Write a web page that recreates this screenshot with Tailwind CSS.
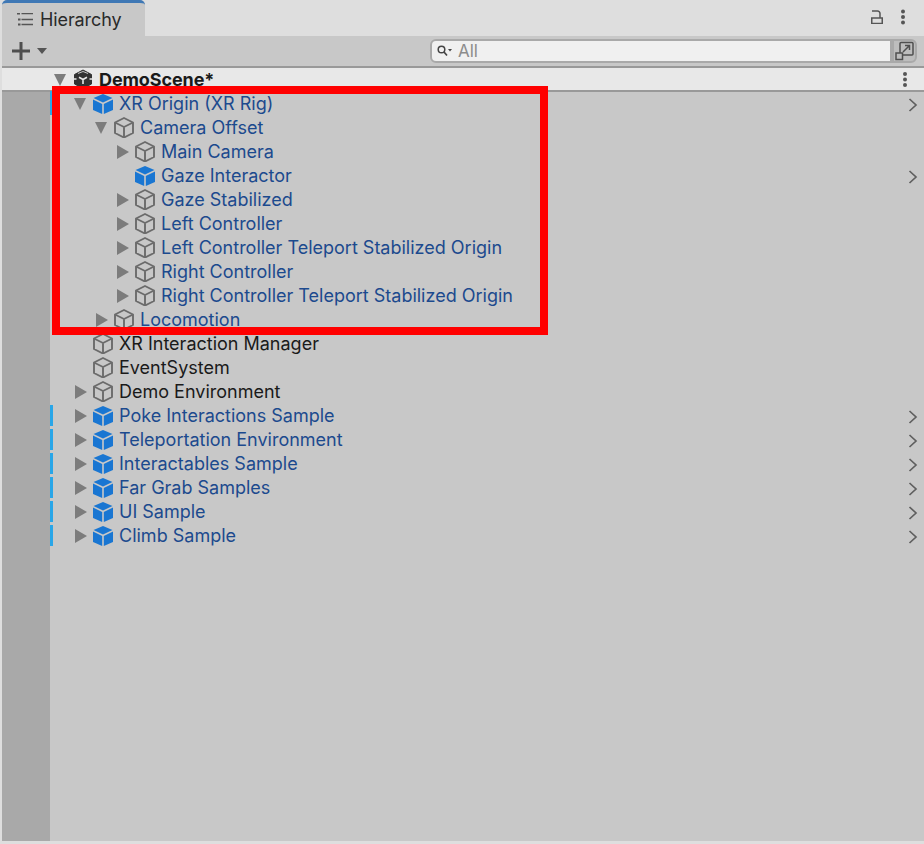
<!DOCTYPE html>
<html>
<head>
<meta charset="utf-8">
<title>Hierarchy</title>
<script src="https://cdn.jsdelivr.net/npm/@tailwindcss/browser@4"></script>
</head>
<body class="w-[924px] h-[844px] overflow-hidden bg-[#dedede] font-['Inter',sans-serif] text-[18px] text-[#1a1a1a]">
<svg class="hidden">
  <symbol id="box" viewBox="0 0 22 22"><path d="M11 2 20 6.500V17l-9 4.500L2 17V6.500zM2 6.500l9 4.500 9-4.500M11 11v10.500" fill="none" stroke="#6b6b6b" stroke-width="1.900" stroke-linejoin="round"/></symbol>
  <symbol id="prefab" viewBox="0 0 22 22"><path d="M11 2 20.500 6 11 10.500 1.500 6z" fill="#1976d2"/><path d="M1 7.500 10.200 12v10L1 18z" fill="#1976d2"/><path d="M21 7.500 11.800 12v10L21 18z" fill="#1976d2"/></symbol>
  <symbol id="down" viewBox="0 0 14 16"><path d="M1 3h12L7 15z" fill="#7c7c7c"/></symbol>
  <symbol id="right" viewBox="0 0 14 16"><path d="M2 2v14l12-7z" fill="#7c7c7c"/></symbol>
  <symbol id="chev" viewBox="0 0 10 14"><path d="M1.500 1 8 7l-6.500 6" fill="none" stroke="#5f5f5f" stroke-width="1.700"/></symbol>
</svg>

<div class="relative h-[841px] ml-[2px]">
  <!-- tab strip -->
  <div class="h-[36px] flex items-stretch justify-between">
    <div class="w-[143px] bg-[#c8c8c8] rounded-t-[5px] border-t-[3px] border-[#3f78b5] flex items-center pl-[15px] gap-[6px]">
      <svg width="17" height="14" viewBox="0 0 17 14"><path d="M4.500 .5H16M4.500 6.500H16M4.500 11.500H16" stroke="#555" stroke-width="1.500"/><path d="M0 .5h3M1 6.500h2.500M1 11.500h2.500" stroke="#555" stroke-width="1.800"/></svg>
      <span class="text-[#2a2a2a] tracking-[-0.1px]">Hierarchy</span>
    </div>
    <div class="flex items-center gap-[17px] pr-[18px] pb-[2px]">
      <svg width="14" height="14" viewBox="0 0 14 14"><path d="M3 1H8.500A2.500 2.500 0 0 1 11 3.500V8" fill="none" stroke="#555" stroke-width="1.500"/><rect x="2.750" y="8" width="10.500" height="5.500" fill="none" stroke="#555" stroke-width="1.500"/></svg>
      <svg width="6" height="16" viewBox="0 0 6 16"><circle cx="3" cy="2.500" r="2" fill="#555"/><circle cx="3" cy="8" r="2" fill="#555"/><circle cx="3" cy="13.500" r="2" fill="#555"/></svg>
    </div>
  </div>
  <!-- toolbar -->
  <div class="h-[30px] bg-[#c8c8c8] flex items-center pl-[10px] pr-[7px]">
    <svg width="18" height="18" viewBox="0 0 18 18"><path d="M9 0v18M0 9h18" stroke="#4f4f4f" stroke-width="3"/></svg>
    <svg class="ml-[7px]" width="10" height="6" viewBox="0 0 10 6"><path d="M0 0h10L5 6z" fill="#555"/></svg>
    <div class="ml-auto flex items-stretch h-[24px]">
      <div class="w-[462px] bg-[#f0f0f0] border-[2px] border-[#a9a9a9] rounded-l-[6px] flex items-center pl-[5px] gap-[1px]">
        <svg width="15" height="12" viewBox="0 0 15 12"><circle cx="4.500" cy="4.500" r="3.300" fill="none" stroke="#444" stroke-width="1.500"/><path d="M7 7l3 3.500" stroke="#444" stroke-width="1.700"/><path d="M11 4h4l-2 2.500z" fill="#444"/></svg>
        <span class="ml-[5px] pt-[1px] text-[#8c8c8c] text-[17px]">All</span>
      </div>
      <div class="w-[25px] bg-[#bdbdbd] border-[2px] border-[#a9a9a9] rounded-r-[6px] flex items-center justify-center">
        <svg class="shrink-0" width="20" height="20" viewBox="0 0 20 20"><path d="M5 12V2.500A1 1 0 0 1 6 1.500h11a1 1 0 0 1 1 1V13a1 1 0 0 1-1 1H8" fill="none" stroke="#4f4f4f" stroke-width="1.500"/><rect x="1" y="12" width="6.500" height="6.500" fill="none" stroke="#4f4f4f" stroke-width="1.500"/><path d="M8 11l6-6M10 4.500h4.500V9" fill="none" stroke="#4f4f4f" stroke-width="1.500"/></svg>
      </div>
    </div>
  </div>
  <!-- scene header -->
  <div class="h-[26px] bg-[#e8e8e8] border-y-[2px] border-[#999999] flex items-center pl-[51px] pr-[16px]">
    <svg width="14" height="16"><use href="#down"/></svg>
    <svg class="ml-[6px]" width="20" height="20" viewBox="0 0 20 20"><path d="M10 1 18.500 5.500V15L10 19.500 1.500 15V5.500z" fill="#333" stroke="#333" stroke-width="1" stroke-linejoin="round"/><path d="M10 10.500V15M10 10.500 6 8.200M10 10.500 14 8.200" stroke="#e8e8e8" stroke-width="1.600" fill="none"/><path d="M5 4.500 10 2.500 15 4.500" stroke="#e8e8e8" stroke-width=".8" fill="none"/><path d="M1 10h2.500M16.500 10H19M10 17v3" stroke="#e8e8e8" stroke-width="1.300"/></svg>
    <span class="ml-[6px] font-bold tracking-[-0.1px]">DemoScene*</span>
    <svg class="ml-auto" width="6" height="15" viewBox="0 0 6 15"><circle cx="3" cy="2" r="2" fill="#555"/><circle cx="3" cy="7.500" r="2" fill="#555"/><circle cx="3" cy="13" r="2" fill="#555"/></svg>
  </div>
  <!-- tree -->
  <div class="flex h-[749px] bg-[#c8c8c8]">
    <div class="w-[48px] h-full bg-[#a9a9a9]"></div>
    <div class="flex-1 -mt-[1px]">
      <div class="relative h-6 flex items-center pl-[23px] text-[#1c4a8e]"><i class="absolute left-0 top-0 h-full w-[3px] bg-[#29a6e8]"></i><svg width="14" height="16"><use href="#down"/></svg><svg class="ml-[5px]" width="22" height="22"><use href="#prefab"/></svg><span class="ml-[5px]">XR Origin (XR Rig)</span><svg class="ml-auto mr-[6px] mt-[3px]" width="10" height="14"><use href="#chev"/></svg></div>
      <div class="h-6 flex items-center pl-[44px] text-[#1c4a8e]"><svg width="14" height="16"><use href="#down"/></svg><svg class="ml-[5px]" width="22" height="22"><use href="#box"/></svg><span class="ml-[5px]">Camera Offset</span></div>
      <div class="h-6 flex items-center pl-[65px] text-[#1c4a8e]"><svg width="14" height="16"><use href="#right"/></svg><svg class="ml-[5px]" width="22" height="22"><use href="#box"/></svg><span class="ml-[5px]">Main Camera</span></div>
      <div class="h-6 flex items-center pl-[84px] text-[#1c4a8e]"><svg width="22" height="22"><use href="#prefab"/></svg><span class="ml-[5px]">Gaze Interactor</span><svg class="ml-auto mr-[6px] mt-[3px]" width="10" height="14"><use href="#chev"/></svg></div>
      <div class="h-6 flex items-center pl-[65px] text-[#1c4a8e]"><svg width="14" height="16"><use href="#right"/></svg><svg class="ml-[5px]" width="22" height="22"><use href="#box"/></svg><span class="ml-[5px]">Gaze Stabilized</span></div>
      <div class="h-6 flex items-center pl-[65px] text-[#1c4a8e]"><svg width="14" height="16"><use href="#right"/></svg><svg class="ml-[5px]" width="22" height="22"><use href="#box"/></svg><span class="ml-[5px]">Left Controller</span></div>
      <div class="h-6 flex items-center pl-[65px] text-[#1c4a8e]"><svg width="14" height="16"><use href="#right"/></svg><svg class="ml-[5px]" width="22" height="22"><use href="#box"/></svg><span class="ml-[5px]">Left Controller Teleport Stabilized Origin</span></div>
      <div class="h-6 flex items-center pl-[65px] text-[#1c4a8e]"><svg width="14" height="16"><use href="#right"/></svg><svg class="ml-[5px]" width="22" height="22"><use href="#box"/></svg><span class="ml-[5px]">Right Controller</span></div>
      <div class="h-6 flex items-center pl-[65px] text-[#1c4a8e]"><svg width="14" height="16"><use href="#right"/></svg><svg class="ml-[5px]" width="22" height="22"><use href="#box"/></svg><span class="ml-[5px]">Right Controller Teleport Stabilized Origin</span></div>
      <div class="h-6 flex items-center pl-[44px] text-[#1c4a8e]"><svg width="14" height="16"><use href="#right"/></svg><svg class="ml-[5px]" width="22" height="22"><use href="#box"/></svg><span class="ml-[5px]">Locomotion</span></div>
      <div class="h-6 flex items-center pl-[42px]"><svg width="22" height="22"><use href="#box"/></svg><span class="ml-[5px]">XR Interaction Manager</span></div>
      <div class="h-6 flex items-center pl-[42px]"><svg width="22" height="22"><use href="#box"/></svg><span class="ml-[5px]">EventSystem</span></div>
      <div class="h-6 flex items-center pl-[23px]"><svg width="14" height="16"><use href="#right"/></svg><svg class="ml-[5px]" width="22" height="22"><use href="#box"/></svg><span class="ml-[5px]">Demo Environment</span></div>
      <div class="relative h-6 flex items-center pl-[23px] text-[#1c4a8e]"><i class="absolute left-0 top-[2px] bottom-[1px] w-[3px] bg-[#29a6e8]"></i><svg width="14" height="16"><use href="#right"/></svg><svg class="ml-[5px]" width="22" height="22"><use href="#prefab"/></svg><span class="ml-[5px]">Poke Interactions Sample</span><svg class="ml-auto mr-[6px] mt-[3px]" width="10" height="14"><use href="#chev"/></svg></div>
      <div class="relative h-6 flex items-center pl-[23px] text-[#1c4a8e]"><i class="absolute left-0 top-[2px] bottom-[1px] w-[3px] bg-[#29a6e8]"></i><svg width="14" height="16"><use href="#right"/></svg><svg class="ml-[5px]" width="22" height="22"><use href="#prefab"/></svg><span class="ml-[5px]">Teleportation Environment</span><svg class="ml-auto mr-[6px] mt-[3px]" width="10" height="14"><use href="#chev"/></svg></div>
      <div class="relative h-6 flex items-center pl-[23px] text-[#1c4a8e]"><i class="absolute left-0 top-[2px] bottom-[1px] w-[3px] bg-[#29a6e8]"></i><svg width="14" height="16"><use href="#right"/></svg><svg class="ml-[5px]" width="22" height="22"><use href="#prefab"/></svg><span class="ml-[5px]">Interactables Sample</span><svg class="ml-auto mr-[6px] mt-[3px]" width="10" height="14"><use href="#chev"/></svg></div>
      <div class="relative h-6 flex items-center pl-[23px] text-[#1c4a8e]"><i class="absolute left-0 top-[2px] bottom-[1px] w-[3px] bg-[#29a6e8]"></i><svg width="14" height="16"><use href="#right"/></svg><svg class="ml-[5px]" width="22" height="22"><use href="#prefab"/></svg><span class="ml-[5px]">Far Grab Samples</span><svg class="ml-auto mr-[6px] mt-[3px]" width="10" height="14"><use href="#chev"/></svg></div>
      <div class="relative h-6 flex items-center pl-[23px] text-[#1c4a8e]"><i class="absolute left-0 top-[2px] bottom-[1px] w-[3px] bg-[#29a6e8]"></i><svg width="14" height="16"><use href="#right"/></svg><svg class="ml-[5px]" width="22" height="22"><use href="#prefab"/></svg><span class="ml-[5px]">UI Sample</span><svg class="ml-auto mr-[6px] mt-[3px]" width="10" height="14"><use href="#chev"/></svg></div>
      <div class="relative h-6 flex items-center pl-[23px] text-[#1c4a8e]"><i class="absolute left-0 top-[2px] bottom-[1px] w-[3px] bg-[#29a6e8]"></i><svg width="14" height="16"><use href="#right"/></svg><svg class="ml-[5px]" width="22" height="22"><use href="#prefab"/></svg><span class="ml-[5px]">Climb Sample</span><svg class="ml-auto mr-[6px] mt-[3px]" width="10" height="14"><use href="#chev"/></svg></div>
    </div>
  </div>
  <!-- red highlight drawn over the tree -->
  <div class="absolute left-[50px] top-[86px] w-[496px] h-[249px] border-[8px] border-[#ff0000]"></div>
</div>
</body>
</html>
